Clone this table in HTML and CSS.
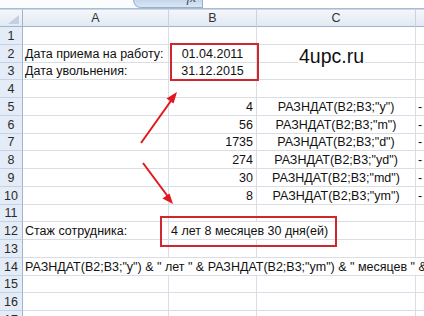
FILE: index.html
```html
<!DOCTYPE html>
<html>
<head>
<meta charset="utf-8">
<link rel="stylesheet" href="styles.css">
</head>
<body>
<div class="app">
  <div class="fbar">
    <div class="namebox"><span class="nbtext">B7</span></div>
    <div class="fxbtn"><span class="fx">fx</span></div>
    <div class="finput"></div>
  </div>
  <div class="sheet">
    <div class="corner"></div><div class="ch">A</div><div class="ch">B</div><div class="ch">C</div><div class="ch"></div>
    <div class="rh">1</div><div class="c"></div><div class="c"></div><div class="c"></div><div class="c"></div>
    <div class="rh">2</div><div class="c">Дата приема на работу:</div><div class="c ctr">01.04.2011</div><div class="c"></div><div class="c"></div>
    <div class="rh">3</div><div class="c">Дата увольнения:</div><div class="c ctr">31.12.2015</div><div class="c"></div><div class="c"></div>
    <div class="rh">4</div><div class="c"></div><div class="c"></div><div class="c"></div><div class="c"></div>
    <div class="rh">5</div><div class="c"></div><div class="c num">4</div><div class="c ctr">РАЗНДАТ(B2;B3;"y")</div><div class="c">-</div>
    <div class="rh">6</div><div class="c"></div><div class="c num">56</div><div class="c ctr">РАЗНДАТ(B2;B3;"m")</div><div class="c">-</div>
    <div class="rh">7</div><div class="c"></div><div class="c num">1735</div><div class="c ctr">РАЗНДАТ(B2;B3;"d")</div><div class="c">-</div>
    <div class="rh">8</div><div class="c"></div><div class="c num">274</div><div class="c ctr">РАЗНДАТ(B2;B3;"yd")</div><div class="c">-</div>
    <div class="rh">9</div><div class="c"></div><div class="c num">30</div><div class="c ctr">РАЗНДАТ(B2;B3;"md")</div><div class="c">-</div>
    <div class="rh">10</div><div class="c"></div><div class="c num">8</div><div class="c ctr">РАЗНДАТ(B2;B3;"ym")</div><div class="c">-</div>
    <div class="rh">11</div><div class="c"></div><div class="c"></div><div class="c"></div><div class="c"></div>
    <div class="rh">12</div><div class="c">Стаж сотрудника:</div><div class="c span2">4 лет 8 месяцев 30 дня(ей)</div><div class="c"></div>
    <div class="rh">13</div><div class="c"></div><div class="c"></div><div class="c"></div><div class="c"></div>
    <div class="rh">14</div><div class="c span4">РАЗНДАТ(B2;B3;"y") &amp; " лет " &amp; РАЗНДАТ(B2;B3;"ym") &amp; " месяцев " &amp; РАЗНДАТ(B2;B3;"md") &amp; " дня(ей)"</div>
    <div class="rh">15</div><div class="c"></div><div class="c"></div><div class="c"></div><div class="c"></div>
    <div class="rh">16</div><div class="c"></div><div class="c"></div><div class="c"></div><div class="c"></div>
    <div class="rh">17</div><div class="c"></div><div class="c"></div><div class="c"></div><div class="c"></div>
  </div>
  <div class="logo">4upc.ru</div>
  <div class="redbox box1"></div>
  <div class="redbox box2"></div>
  <svg class="arrows" width="424" height="316" viewBox="0 0 424 316">
    <line x1="141" y1="143" x2="173" y2="98" stroke="#e3151d" stroke-width="2"/>
    <polygon points="177,92 166.5,98.5 173.5,103.5" fill="#e3151d"/>
    <line x1="143" y1="163" x2="169" y2="198" stroke="#e3151d" stroke-width="2"/>
    <polygon points="173,204 162.5,198.5 169.5,193.5" fill="#e3151d"/>
  </svg>
</div>
</body>
</html>
```

FILE: styles.css
```css
* { box-sizing: border-box; }
html, body { margin: 0; padding: 0; background: #fff; }
.app {
  position: relative;
  width: 424px;
  height: 316px;
  overflow: hidden;
  font-family: "Liberation Sans", Arial, sans-serif;
  font-size: 12.5px;
  color: #111;
}
.fbar {
  display: flex;
  height: 9px;
  background: #fbfcfd;
  border-bottom: 1px solid #a7bbd4;
  overflow: hidden;
}
.namebox {
  width: 133px;
  text-align: center;
  padding-right: 22px;
  font-size: 13px;
  color: #333;
}
.nbtext { display: block; margin-top: -11px; line-height: 13px; }
.fxbtn {
  width: 70px;
  height: 8px;
  border: 1px solid #97b0cf;
  border-top: none;
  border-bottom-left-radius: 9px;
  background: linear-gradient(#c5d6ec, #dbe6f4);
  text-align: right;
  padding-right: 6px;
  font-style: italic;
  font-family: "Liberation Serif", serif;
  font-size: 13px;
  color: #444;
}
.fx { display: block; margin-top: -9px; line-height: 13px; }
.finput { flex: 1; background: #fff; }
.sheet {
  display: grid;
  grid-template-columns: 23px 146px 88px 159px 60px;
  grid-template-rows: 18px;
  grid-auto-rows: 17.75px;
  width: 476px;
}
.corner, .ch {
  background: linear-gradient(#f4f7fb, #e2e9f3);
  border-right: 1px solid #c6d3e3;
  border-bottom: 1px solid #9fb5cf;
  border-top: 1px solid #c9d6e6;
}
.corner { position: relative; border-right-color: #9fb5cf; }
.corner::after {
  content: "";
  position: absolute;
  right: 3px;
  bottom: 2px;
  width: 11px;
  height: 9px;
  background: #c3d0e1;
  clip-path: polygon(100% 0, 100% 100%, 0 100%);
}
.ch {
  display: flex;
  align-items: center;
  justify-content: center;
  color: #333;
  font-size: 12.5px;
}
.rh {
  display: flex;
  align-items: center;
  justify-content: center;
  background: #e4ecf7;
  border-right: 1px solid #9fb5cf;
  border-bottom: 1px solid #c4d2e4;
  color: #2a2a2a;
  padding-top: 1px;
}
.c {
  display: flex;
  align-items: center;
  padding: 1px 2px 0 2px;
  border-right: 1px solid #dadee4;
  border-bottom: 1px solid #dadee4;
  white-space: nowrap;
  overflow: hidden;
}
.ctr { justify-content: center; }
.num { justify-content: flex-end; padding-right: 3px; }
.span2 { grid-column: span 2; }
.span4 { grid-column: span 4; }
.logo {
  position: absolute;
  left: 298px;
  top: 46px;
  font-size: 19.5px;
  line-height: 20px;
  color: #111;
  background: #fff;
  padding: 0 1px;
}
.redbox {
  position: absolute;
  border: 2px solid #cf2630;
}
.box1 { left: 170px; top: 43px; width: 89px; height: 38px; }
.box2 { left: 160px; top: 216px; width: 177px; height: 31px; }
.arrows { position: absolute; left: 0; top: 0; }
```
